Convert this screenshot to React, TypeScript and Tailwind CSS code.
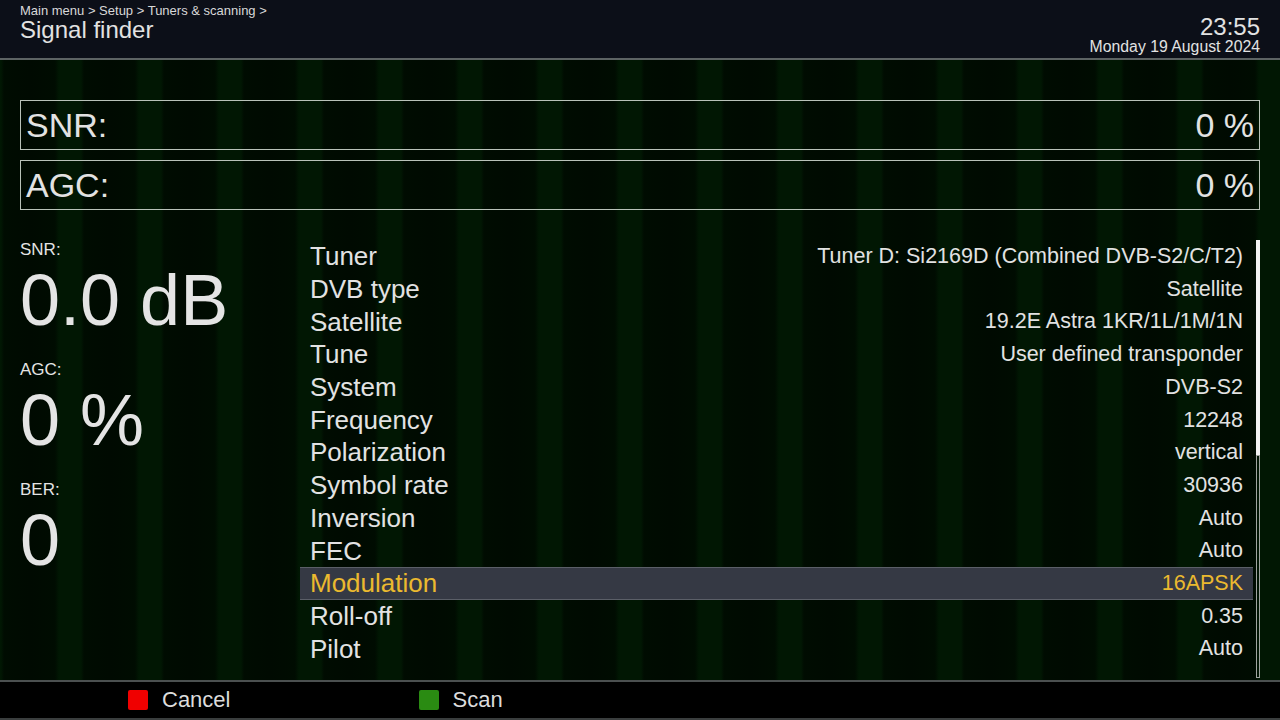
import React from "react";

type Row = { label: string; value: string; selected?: boolean };

const rows: Row[] = [
  { label: "Tuner", value: "Tuner D: Si2169D (Combined DVB-S2/C/T2)" },
  { label: "DVB type", value: "Satellite" },
  { label: "Satellite", value: "19.2E Astra 1KR/1L/1M/1N" },
  { label: "Tune", value: "User defined transponder" },
  { label: "System", value: "DVB-S2" },
  { label: "Frequency", value: "12248" },
  { label: "Polarization", value: "vertical" },
  { label: "Symbol rate", value: "30936" },
  { label: "Inversion", value: "Auto" },
  { label: "FEC", value: "Auto" },
  { label: "Modulation", value: "16APSK", selected: true },
  { label: "Roll-off", value: "0.35" },
  { label: "Pilot", value: "Auto" },
];

const readouts = [
  { label: "SNR:", value: "0.0 dB" },
  { label: "AGC:", value: "0 %" },
  { label: "BER:", value: "0" },
];

function LevelBox({ label, value }: { label: string; value: string }) {
  return (
    <div className="flex h-[50px] items-center justify-between border border-[#b9c2b9] px-[5px] text-[34px] leading-none text-[#e2e2e2]">
      <span>{label}</span>
      <span>{value}</span>
    </div>
  );
}

function SettingRow({ label, value, selected }: Row) {
  return (
    <div
      className={
        selected
          ? "flex h-[32.7px] items-center justify-between border-y border-[#5b5f68] bg-[#353944] pl-[10px] pr-[10px] text-[#ebb92f]"
          : "flex h-[32.7px] items-center justify-between border-y border-transparent pl-[10px] pr-[10px] text-[#e2e2e2]"
      }
    >
      <span className="text-[26px] leading-none">{label}</span>
      <span className="pt-[1px] text-[21.5px] leading-none">{value}</span>
    </div>
  );
}

export default function App() {
  return (
    <div className="flex h-[720px] w-[1280px] flex-col overflow-hidden bg-black font-['Liberation_Sans',Arial,sans-serif]">
      {/* header */}
      <div className="flex h-[60px] shrink-0 justify-between border-b-2 border-[#5d6363] bg-[#0c0f18] px-5 text-[#e2e2e2]">
        <div className="flex flex-col">
          <span className="mt-[3px] text-[13px] leading-[16px] text-[#d8d8d8]">
            Main menu &gt; Setup &gt; Tuners &amp; scanning &gt;
          </span>
          <span className="-mt-[2px] text-[24px] leading-[26px]">Signal finder</span>
        </div>
        <div className="flex flex-col items-end">
          <span className="mt-[15px] text-[24px] leading-[24px]">23:55</span>
          <span className="text-[15.8px] leading-[16px]">Monday 19 August 2024</span>
        </div>
      </div>

      {/* striped main area */}
      <div className="flex h-[620px] shrink-0 flex-col bg-[repeating-linear-gradient(90deg,#011703_0px,#011703_1px,#000c01_4px,#000a01_30px,#000c01_55px,#011703_59px,#011703_80px)] pt-[40px]">
        <div className="flex flex-col gap-[10px] px-5">
          <LevelBox label="SNR:" value="0 %" />
          <LevelBox label="AGC:" value="0 %" />
        </div>

        <div className="mt-[30px] flex pl-5 pr-5">
          <div className="flex w-[280px] shrink-0 flex-col text-[#e4e4e4]">
            {readouts.map((r) => (
              <div key={r.label} className="flex h-[120px] flex-col">
                <span className="h-[20px] text-[17px] leading-[20px]">{r.label}</span>
                <span className="h-[80px] text-[72px] leading-[80px]">{r.value}</span>
              </div>
            ))}
          </div>

          <div className="flex w-[953px] flex-col">
            {rows.map((r) => (
              <SettingRow key={r.label} {...r} />
            ))}
          </div>

          <div className="ml-[3px] flex h-[438px] w-[4px] flex-col">
            <div className="h-[215px] bg-[#f2f2f2]" />
            <div className="flex-1 border border-[#a0a4a0]" />
          </div>
        </div>
      </div>

      {/* colour key bar */}
      <div className="flex h-[40px] shrink-0 items-center border-t-2 border-b-2 border-t-[#4b5050] border-b-[#3a3e3e] bg-black text-[22px] text-[#dcdcdc]">
        <div className="ml-[128px] flex items-center gap-[14px]">
          <span className="h-[20px] w-[20px] rounded-[2px] bg-[#f00000]" />
          <span className="leading-none">Cancel</span>
        </div>
        <div className="ml-[189px] flex items-center gap-[13px]">
          <span className="h-[20px] w-[20px] rounded-[2px] bg-[#2a8b12]" />
          <span className="leading-none">Scan</span>
        </div>
      </div>
    </div>
  );
}
